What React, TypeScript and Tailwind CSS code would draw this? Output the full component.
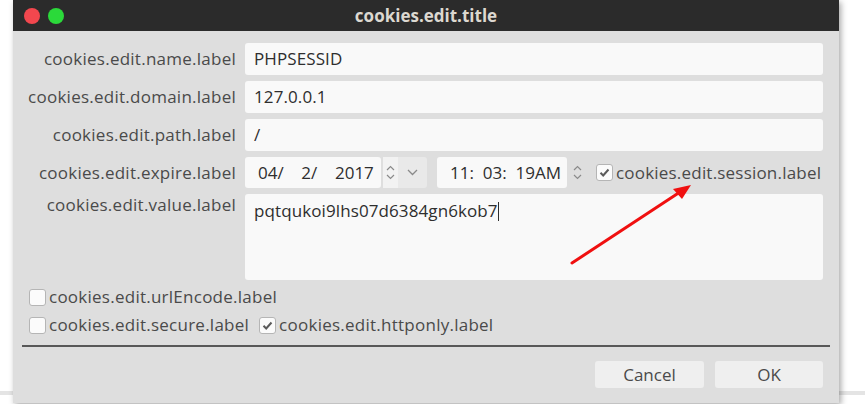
import React from 'react';

const font = { fontFamily: '"Open Sans", "Noto Sans", sans-serif' };

function Check({ checked }: { checked?: boolean }) {
  return (
    <span className="w-[17px] h-[17px] shrink-0 rounded-[3px] border border-[#b5b5b5] bg-[#fbfbfb] flex items-center justify-center">
      {checked && (
        <svg width="11" height="11" viewBox="0 0 11 11">
          <path d="M1.5 5.8 L4.2 8.5 L9.5 2.5" fill="none" stroke="#5a5a5a" strokeWidth="2" />
        </svg>
      )}
    </span>
  );
}

function Spinner() {
  return (
    <div className="w-[15px] h-[30px] flex flex-col items-center justify-center gap-[3px] text-[#8a8a8a]">
      <svg width="9" height="6" viewBox="0 0 9 6">
        <path d="M1 5 L4.5 1.5 L8 5" fill="none" stroke="currentColor" strokeWidth="1.2" />
      </svg>
      <svg width="9" height="6" viewBox="0 0 9 6">
        <path d="M1 1 L4.5 4.5 L8 1" fill="none" stroke="currentColor" strokeWidth="1.2" />
      </svg>
    </div>
  );
}

function Label({ children, top }: { children: React.ReactNode; top?: boolean }) {
  return (
    <div
      className={`w-[232px] shrink-0 text-right pr-[9px] text-[17px] leading-[22px] tracking-[0.25px] text-[#4a4a4a] whitespace-nowrap ${top ? '' : 'self-center'}`}
    >
      {children}
    </div>
  );
}

function TextRow({ label, value }: { label: string; value: string }) {
  return (
    <div className="flex h-[32px]">
      <Label>{label}</Label>
      <div className="flex-1 rounded-[3px] bg-[#f9f9f9] flex items-center px-[9px] text-[17px] tracking-[0.1px] text-[#2e2e2e]">
        {value}
      </div>
    </div>
  );
}

export default function App() {
  return (
    <div className="w-[865px] h-[404px] bg-white relative overflow-hidden" style={font}>
      <div className="absolute left-0 right-0 top-[391px] h-[4px] bg-[#e4e4e4]" />
      <div className="relative ml-[13px] w-[826px] h-[403px] bg-[#dedede] flex flex-col shadow-[2px_2px_6px_rgba(0,0,0,0.35)]">
        {/* title bar */}
        <div className="h-[31px] bg-[#2b2b2b] flex items-center relative">
          <div className="flex gap-[8px] pl-[11px]">
            <span className="w-[16px] h-[16px] rounded-full bg-[#f2474e]" />
            <span className="w-[16px] h-[16px] rounded-full bg-[#2bd93a]" />
          </div>
          <div className="absolute inset-0 flex items-center justify-center text-[17px] font-bold text-[#dcd8d0]">
            cookies.edit.title
          </div>
        </div>

        {/* form */}
        <div className="flex flex-col gap-[6px] pt-[12px] pr-[16px]">
          <TextRow label="cookies.edit.name.label" value="PHPSESSID" />
          <TextRow label="cookies.edit.domain.label" value="127.0.0.1" />
          <TextRow label="cookies.edit.path.label" value="/" />

          <div className="flex h-[31px]">
            <Label>cookies.edit.expire.label</Label>
            <div className="flex-1 flex items-center">
              <div className="w-[136px] h-full rounded-[3px] bg-[#f9f9f9] flex items-center pl-[13px] text-[17px] text-[#2e2e2e] whitespace-pre">
                {'04/    2/    2017'}
              </div>
              <div className="ml-[2px] bg-[#e9e9e9] h-full flex items-center rounded-[3px]">
                <div className="bg-[#f2f2f2] h-full">
                  <Spinner />
                </div>
                <div className="w-[29px] h-full flex items-center justify-center text-[#8a8a8a]">
                  <svg width="11" height="7" viewBox="0 0 11 7">
                    <path d="M1 1 L5.5 5.5 L10 1" fill="none" stroke="currentColor" strokeWidth="1.3" />
                  </svg>
                </div>
              </div>
              <div className="ml-[10px] w-[130px] h-full rounded-[3px] bg-[#f9f9f9] flex items-center pl-[13px] text-[17px] text-[#2e2e2e] whitespace-pre">
                {'11:  03:  19AM'}
              </div>
              <div className="ml-[3px] h-full">
                <Spinner />
              </div>
              <label className="ml-[11px] flex items-center gap-[3px] text-[17px] tracking-[0.2px] text-[#4a4a4a] whitespace-nowrap">
                <Check checked />
                cookies.edit.session.label
              </label>
            </div>
          </div>

          <div className="flex h-[86px]">
            <Label top>cookies.edit.value.label</Label>
            <div className="flex-1 rounded-[3px] bg-[#f9f9f9] px-[9px] pt-[4px] text-[17px] tracking-[0.1px] text-[#2e2e2e]">
              pqtqukoi9lhs07d6384gn6kob7<span className="inline-block w-px h-[19px] bg-[#2e2e2e] align-[-4px]" />
            </div>
          </div>
        </div>

        {/* options */}
        <div className="flex flex-col gap-[8px] pl-[16px] pt-[7px] text-[17px] leading-[20px] tracking-[0.25px] text-[#4a4a4a]">
          <label className="flex items-center gap-[3px]">
            <Check />
            cookies.edit.urlEncode.label
          </label>
          <div className="flex items-center gap-[10px]">
            <label className="flex items-center gap-[3px]">
              <Check />
              cookies.edit.secure.label
            </label>
            <label className="flex items-center gap-[3px]">
              <Check checked />
              cookies.edit.httponly.label
            </label>
          </div>
        </div>

        <div className="mx-[9px] mt-[10px] h-[2px] bg-[#585858]" />

        <div className="flex justify-end gap-[11px] pr-[16px] pt-[14px]">
          <button className="w-[109px] h-[27px] rounded-[3px] bg-[#efefef] text-[17px] text-[#4a4a4a]">Cancel</button>
          <button className="w-[108px] h-[27px] rounded-[3px] bg-[#efefef] text-[17px] text-[#4a4a4a]">OK</button>
        </div>
      </div>

      {/* annotation arrow */}
      <svg className="absolute left-0 top-0 pointer-events-none" width="865" height="404">
        <line x1="572" y1="263" x2="680" y2="192" stroke="#f01010" strokeWidth="3" strokeLinecap="round" />
        <path d="M691 185 L673 189 L682 199 Z" fill="#f01010" />
      </svg>
    </div>
  );
}
